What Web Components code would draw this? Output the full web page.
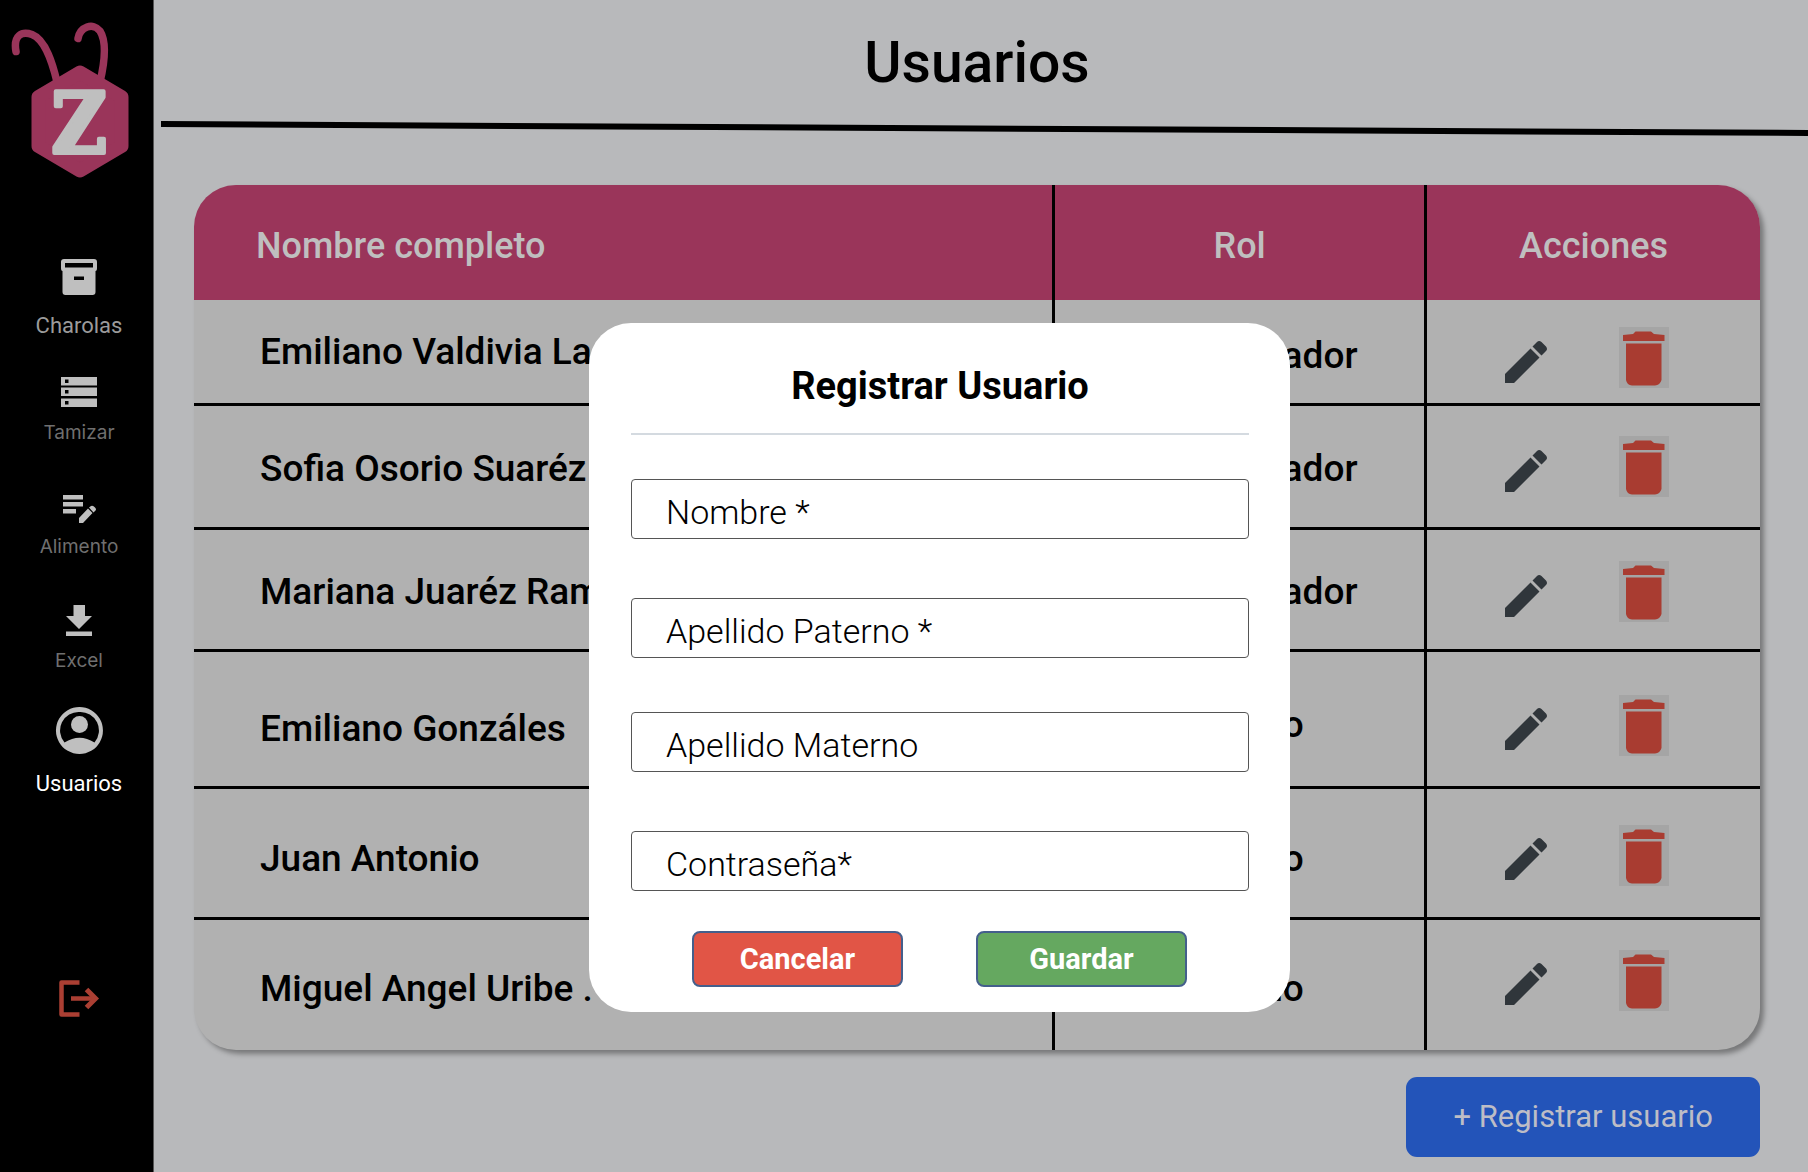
<!DOCTYPE html>
<html lang="es">
<head>
<meta charset="utf-8">
<title>Usuarios</title>
<style>
html,body{margin:0;min-height:100%}
body{font-family:Roboto,"Liberation Sans",sans-serif;background:#b8b9bb;color:#000}
</style>
</head>
<body>
<users-app></users-app>
<script>
const define = (name, html, setup) => {
  const tpl = document.createElement('template');
  tpl.innerHTML = html;
  customElements.define(name, class extends HTMLElement {
    connectedCallback() {
      if (this.shadowRoot) return;
      this.attachShadow({ mode: 'open' }).append(tpl.content.cloneNode(true));
      if (setup) setup(this, this.shadowRoot);
    }
  });
};

define('brand-logo', `
<style>:host{display:block;width:138px;height:160px}svg{display:block}</style>
<svg width="138" height="160" viewBox="10 20 138 160" role="img" aria-label="Z">
  <g fill="none" stroke="#9a355a" stroke-linecap="round">
    <path stroke-width="7.500" d="M16 51.500C13 35 22 31 32 34.500C46 40 53 65 57 82"/>
    <path stroke-width="7.500" d="M78 38.500C80 27 93 22 100 31C107 42 104 65 100 82"/>
  </g>
  <path fill="#9a355a" stroke="#9a355a" stroke-width="14" stroke-linejoin="round" d="M80 72.500L121.500 97V146L80 170.500L38.500 146V97Z"/>
  <text x="79" y="153" text-anchor="middle" font-family="DejaVu Serif Condensed, DejaVu Serif, serif" font-weight="700" font-size="84" fill="#bfbfbf" stroke="#bfbfbf" stroke-width="4" stroke-linejoin="round">Z</text>
</svg>`);

define('nav-item', `
<style>
:host{display:block;color:#6f6f6f;font-size:19px;font-family:Inter,Roboto,sans-serif}
:host([large]){color:#9b9b9b;font-size:22px;font-family:Roboto,sans-serif}
:host([active]){color:#fff}
a{display:flex;flex-direction:column;align-items:center;gap:11px;color:inherit;text-decoration:none;line-height:24px}
:host([large]) a{gap:17px}
::slotted(svg){display:block;fill:#bfbfbf}
</style>
<a href="#"><slot name="icon"></slot><slot></slot></a>`);

define('side-bar', `
<style>
:host{display:block;background:#000;border-right:1px solid #555;box-sizing:border-box}
nav{display:flex;flex-direction:column;align-items:center;padding:20px 0 0 5px}
brand-logo{margin-bottom:77px}
.s{margin-top:36px}
.m{margin-top:43px}
.l{margin-top:34px}
button{margin-top:180px;padding:0;border:0;background:none;display:block}
button svg{display:block}
</style>
<nav>
  <brand-logo></brand-logo>
  <nav-item large>
    <svg slot="icon" width="40" height="40" viewBox="0 0 40 40"><path fill-rule="evenodd" d="M5 2H35Q38 2 38 5V11Q38 14 36.500 14V35Q36.500 38 33.500 38H6.500Q3.500 38 3.500 35V14Q2 14 2 11V5Q2 2 5 2ZM6 6V10.500H34V6ZM15 19.500V23H25V19.500Z"/></svg>
    Charolas</nav-item>
  <nav-item class="s">
    <svg slot="icon" width="36" height="36" viewBox="0 0 36 36"><path fill-rule="evenodd" d="M0 3H36V11.500H0ZM4 5.500V9H7.500V5.500ZM0 13.500H36V22H0ZM4 16V19.500H7.500V16ZM0 24.500H36V33H0ZM4 27V30.500H7.500V27Z"/></svg>
    Tamizar</nav-item>
  <nav-item class="m">
    <svg slot="icon" width="36" height="36" viewBox="0 0 36 36"><path d="M2 7H22V11.500H2ZM2 14H22V18.500H2ZM2 21H15V25.500H2ZM18 30L27 20.500L31.500 25L22 35H18ZM28 19.500L30 18Q32 17 34 19.500Q36 21.500 34 23L32.500 24.500Z"/></svg>
    Alimento</nav-item>
  <nav-item class="m">
    <svg slot="icon" width="36" height="36" viewBox="0 0 36 36"><path d="M12.500 3H24V14H31L18 27L5 14H12.500ZM5 29.500H31V34H5Z"/></svg>
    Excel</nav-item>
  <nav-item class="l" large active>
    <svg slot="icon" width="48" height="48" viewBox="0 0 48 48"><path fill-rule="evenodd" d="M24.500 0A23.500 23.500 0 1 1 24.400 0ZM24.500 5A18.500 18.500 0 0 0 9.500 35.500Q24.500 26 39.500 35.500A18.500 18.500 0 0 0 24.500 5Z"/><circle cx="24.500" cy="17.500" r="8.500"/></svg>
    Usuarios</nav-item>
  <button type="button" aria-label="Salir"><svg width="44" height="44" viewBox="0 0 44 44" fill="none" stroke="#ab3f33"><path stroke-width="4.500" stroke-linejoin="round" d="M22.500 6.500H4.500V38.500H22.500"/><path stroke-width="4.500" d="M14 22.500H38"/><path stroke-width="5" d="M29.500 13.500L38.500 22.500L29.500 31.500"/></svg></button>
</nav>`);

define('page-header', `
<style>
:host{display:block}
h1{margin:0;padding:30px 8px 26px 0;text-align:center;font-size:57px;line-height:65px;font-weight:500}
svg{display:block;width:calc(100% - 7px);height:16px;margin-left:7px}
</style>
<h1><slot></slot></h1>
<svg viewBox="0 0 1647 16" preserveAspectRatio="none"><path d="M0 0L1647 9V15L0 6Z"/></svg>`);

define('users-table', `
<style>
:host{display:block;border-radius:42px;overflow:hidden;background:#b1b1b1;box-shadow:4px 4px 5px rgba(0,0,0,.35)}
table{width:100%;table-layout:fixed;border-spacing:0;font-size:37px;line-height:40px;font-weight:500}
.c1{width:54.8%}.c2{width:23.75%}
th{background:#9a355a;color:#bfbfbf;height:115px;font-size:36px;font-weight:500;padding:6px 0 0;box-sizing:border-box}
th:first-child{text-align:left;padding-left:62px}
td{padding:0;border-bottom:3px solid #000;height:var(--h);box-sizing:border-box;white-space:nowrap}
tr:last-child td{border-bottom:0}
th+th,td+td{border-left:3px solid #000}
.name{padding:var(--name) 0 0 66px}
.role{text-align:center;padding-top:var(--role)}
.acts{padding:var(--acts) 20px 0 0}
tr:last-child .acts{padding-bottom:10px}
.acts div{display:flex;justify-content:center;align-items:center;gap:65px}
button{display:block;border:0;padding:0;background:none}
.edit{padding-top:8px}
.del{background:#a5a5a5}
svg{display:block}
</style>
<table>
<colgroup><col class="c1"><col class="c2"><col></colgroup>
<thead><tr><th>Nombre completo</th><th>Rol</th><th>Acciones</th></tr></thead>
<tbody></tbody>
</table>`, (host, root) => {
  const rows = [
    ['Emiliano Valdivia La', 'Administrador', 106, 0, 8, 12],
    ['Sofia Osorio Suaréz', 'Administrador', 124, 4, 4, 0],
    ['Mariana Juaréz Ram', 'Administrador', 122, 4, 4, 4],
    ['Emiliano Gonzáles', 'Alumno', 137, 20, 12, 12],
    ['Juan Antonio', 'Alumno', 131, 12, 12, 4],
    ['Miguel Angel Uribe .', 'Alumno', 130, 8, 8, 0]
  ];
  root.querySelector('tbody').innerHTML = rows.map(([n, r, h, a, b, c]) => `
<tr style="--h:${h}px;--name:${a}px;--role:${b}px;--acts:${c}px"><td class="name">${n}</td><td class="role">${r}</td><td class="acts"><div>
<button class="edit" type="button" aria-label="Editar"><svg width="56" height="56" viewBox="0 0 56 56"><path fill="#30363b" d="M7 40L32.500 14.500L41.500 23.500L16 49H7ZM34.500 12.500L39 8Q41 6 43.500 8L48 12.500Q50 15 48 17L43.500 21.500Z"/></svg></button>
<button class="del" type="button" aria-label="Eliminar"><svg width="50" height="61" viewBox="0 0 50 61" fill="#a93c31"><path d="M4 8L14 7L16.500 4.500H32L35 7L45.500 8V14H4ZM7 16.500H42.500V53Q41 58 36 58.500H13Q8 58 7 53Z"/></svg></button>
</div></td></tr>`).join('');
});

define('form-field', `
<style>
:host{display:block}
input{display:block;width:100%;height:60px;box-sizing:border-box;margin:0;padding:6px 34px 0;border:1px solid #555;border-radius:4px;background:#fff;font:300 34px/40px Roboto,sans-serif;color:#000}
input::placeholder{color:#000;opacity:1}
</style>
<input>`, (host, root) => {
  const input = root.querySelector('input');
  input.type = host.getAttribute('type') || 'text';
  input.placeholder = host.getAttribute('label');
  input.setAttribute('aria-label', host.getAttribute('label'));
});

define('form-button', `
<style>
:host{display:block;flex:1}
button{width:100%;height:56px;box-sizing:border-box;padding:0;border:2px solid #445f8c;border-radius:8px;background:var(--fill);color:#fff;font:700 29px/32px Roboto,sans-serif}
</style>
<button type="button"><slot></slot></button>`);

define('user-dialog', `
<style>
:host{position:absolute;inset:0;display:flex;justify-content:center;align-items:flex-start;padding:323px 0 0 71px;box-sizing:border-box}
section{width:701px;box-sizing:border-box;padding:42px 41px 25px 42px;border-radius:42px;background:#fff}
h2{margin:0;padding-bottom:26px;border-bottom:2px solid #d4dae0;text-align:center;font-size:38px;line-height:42px;font-weight:700}
form{display:flex;flex-direction:column;padding-top:44px;gap:59px}
.near{margin-top:-5px}
.row{display:flex;gap:73px;padding:0 62px 0 61px;margin-top:-19px}
</style>
<section role="dialog" aria-label="Registrar Usuario">
  <h2>Registrar Usuario</h2>
  <form>
    <form-field label="Nombre *"></form-field>
    <form-field label="Apellido Paterno *"></form-field>
    <form-field class="near" label="Apellido Materno"></form-field>
    <form-field label="Contraseña*" type="password"></form-field>
    <div class="row">
      <form-button style="--fill:#e15546">Cancelar</form-button>
      <form-button style="--fill:#65a860">Guardar</form-button>
    </div>
  </form>
</section>`);

define('primary-button', `
<style>
:host{display:block}
button{display:block;padding:20px 47px;border:0;border-radius:11px;background:#2354b9;color:#bdbdc6;font:400 31px/40px Roboto,sans-serif}
</style>
<button type="button"><slot></slot></button>`);

define('users-app', `
<style>
:host{display:grid;grid-template-columns:154px 1fr;min-height:100vh;position:relative}
main{min-width:0}
.content{display:flex;flex-direction:column;padding:48px 48px 15px 40px;gap:27px}
primary-button{align-self:flex-end}
</style>
<side-bar></side-bar>
<main>
  <page-header>Usuarios</page-header>
  <div class="content">
    <users-table></users-table>
    <primary-button>+ Registrar usuario</primary-button>
  </div>
</main>
<user-dialog></user-dialog>`);
</script>
</body>
</html>
